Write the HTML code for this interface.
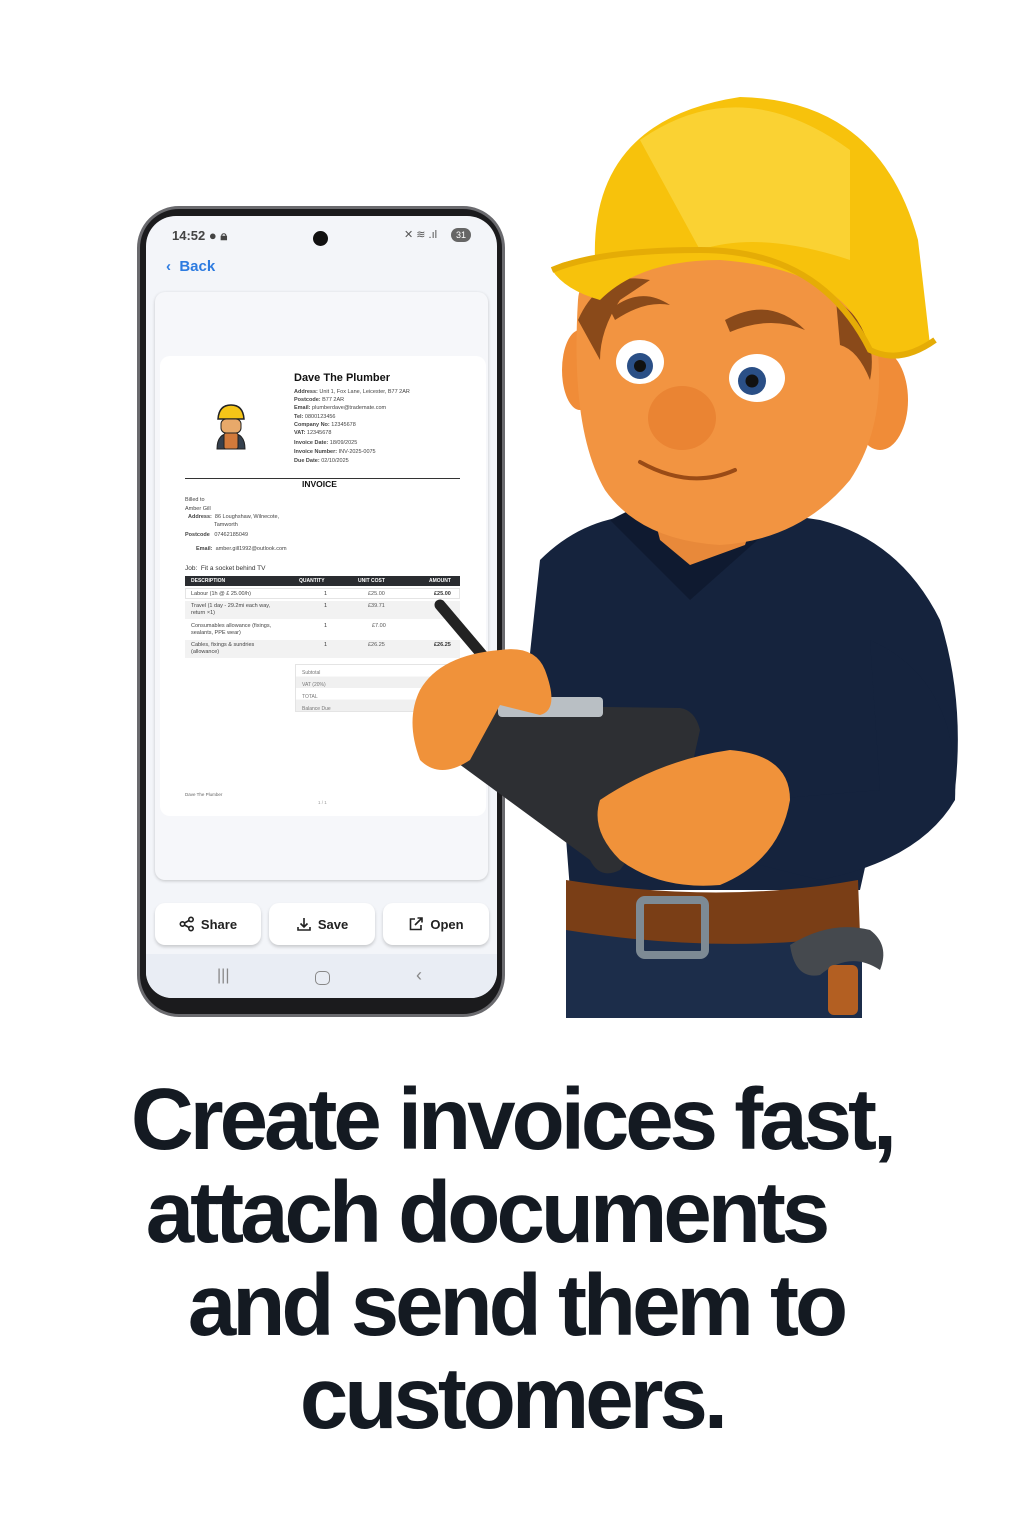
<!DOCTYPE html>
<html><head><meta charset="utf-8"><style>
*{margin:0;padding:0;box-sizing:border-box}
body{width:1024px;height:1536px;background:#fff;position:relative;overflow:hidden;font-family:"Liberation Sans",sans-serif}
.abs{position:absolute}
.phone{left:137px;top:206px;width:368px;height:811px;border-radius:42px;background:#1b1b1d;border:3px solid #6a6a6e}
.screen{left:146px;top:216px;width:351px;height:782px;border-radius:30px 30px 26px 26px;background:#f3f5f9;overflow:hidden}
.t{position:absolute;white-space:nowrap;color:#333}
.btn{position:absolute;top:687px;width:106px;height:42px;background:#fff;border-radius:10px;box-shadow:0 2px 3px rgba(0,0,0,.18);font-weight:bold;font-size:13px;color:#222;display:flex;align-items:center;justify-content:center;gap:6px}
.h{position:absolute;left:0;width:1024px;text-align:center;font-weight:bold;font-size:87px;letter-spacing:-4px;color:#141a22;line-height:93px}
</style></head><body>

<div class="abs phone"></div>
<div class="abs screen">
  <div class="t" style="left:26px;top:12px;font-size:13px;font-weight:bold;color:#444">14:52 ● 🔒︎</div>
  <div class="abs" style="left:167px;top:15px;width:15px;height:15px;border-radius:50%;background:#111"></div>
  <div class="t" style="left:258px;top:12px;font-size:11px;color:#555">✕ ≋ .ıl</div>
  <div class="abs" style="left:305px;top:12px;width:20px;height:14px;border-radius:7px;background:#666;color:#fff;font-size:9px;text-align:center;line-height:14px">31</div>
  <div class="t" style="left:20px;top:42px;font-size:15px;font-weight:bold;color:#2d7be0">‹&nbsp; Back</div>
  <div class="abs" style="left:9px;top:76px;width:333px;height:588px;border-radius:10px;background:#f6f7fa;box-shadow:0 1px 3px rgba(0,0,0,.2)"></div>
  <div class="abs" style="left:14px;top:140px;width:326px;height:460px;border-radius:10px;background:#fff"></div>
  <svg class="abs" style="left:68px;top:187px" width="34" height="48" viewBox="0 0 34 48">
    <path d="M4 16 Q5 2 17 2 Q29 2 30 16Z" fill="#f5c518" stroke="#222" stroke-width="1.5"/>
    <rect x="7" y="16" width="20" height="14" rx="5" fill="#e8a96a" stroke="#222"/>
    <path d="M3 46 Q3 30 17 30 Q31 30 31 46Z" fill="#35404d" stroke="#222"/>
    <rect x="10" y="30" width="14" height="16" rx="2" fill="#d27a3b" stroke="#222"/>
  </svg>
  <div class="t" style="left:148px;top:156px;font-size:11px;font-weight:bold;color:#111">Dave The Plumber</div>
  <div class="t" style="left:148px;top:172px;font-size:5.5px;line-height:8.2px;color:#444"><b>Address:</b> Unit 1, Fox Lane, Leicester, B77 2AR<br><b>Postcode:</b> B77 2AR<br><b>Email:</b> plumberdave@trademate.com<br><b>Tel:</b> 0800123456<br><b>Company No:</b> 12345678<br><b>VAT:</b> 12345678</div>
  <div class="t" style="left:148px;top:223px;font-size:5.5px;line-height:9px;color:#444"><b>Invoice Date:</b> 18/09/2025<br><b>Invoice Number:</b> INV-2025-0075<br><b>Due Date:</b> 02/10/2025</div>
  <div class="abs" style="left:39px;top:262px;width:275px;height:1px;background:#333"></div>
  <div class="t" style="left:156px;top:263px;font-size:8.5px;font-weight:bold;color:#111">INVOICE</div>
  <div class="t" style="left:39px;top:280px;font-size:5.5px;line-height:8.5px;color:#444">Billed to<br>Amber Gill</div>
  <div class="t" style="left:42px;top:298px;font-size:5.5px;line-height:7.5px;color:#444"><b>Address:</b>&nbsp; 86 Loughshaw, Wilnecote,<br>&nbsp;&nbsp;&nbsp;&nbsp;&nbsp;&nbsp;&nbsp;&nbsp;&nbsp;&nbsp;&nbsp;&nbsp;&nbsp;&nbsp;&nbsp;&nbsp;&nbsp;Tamworth</div>
  <div class="t" style="left:39px;top:316px;font-size:5.5px;color:#444"><b>Postcode</b>&nbsp;&nbsp;&nbsp;07462185049</div>
  <div class="t" style="left:50px;top:330px;font-size:5.5px;color:#444"><b>Email:</b>&nbsp; amber.gill1992@outlook.com</div>
  <div class="t" style="left:39px;top:349px;font-size:6.5px;color:#333">Job:&nbsp; Fit a socket behind TV</div>
  <div class="abs" style="left:39px;top:360px;width:275px;height:10px;background:#2a2c30"></div>
  <div class="t" style="left:45px;top:362px;font-size:5px;font-weight:bold;color:#fff">DESCRIPTION</div>
  <div class="t" style="left:153px;top:362px;font-size:5px;font-weight:bold;color:#fff">QUANTITY</div>
  <div class="t" style="left:212px;top:362px;font-size:5px;font-weight:bold;color:#fff">UNIT COST</div>
  <div class="t" style="left:283px;top:362px;font-size:5px;font-weight:bold;color:#fff">AMOUNT</div>
  <div class="abs" style="left:39px;top:372px;width:275px;height:11px;border:1px solid #e4e4e4"></div>
  <div class="abs" style="left:39px;top:385px;width:275px;height:18px;background:#f2f2f2"></div>
  <div class="abs" style="left:39px;top:424px;width:275px;height:18px;background:#f2f2f2"></div>
  <div class="t" style="left:45px;top:375px;font-size:5.5px;color:#444">Labour (1h @ £ 25.00/h)</div>
  <div class="t" style="left:45px;top:387px;font-size:5.5px;line-height:7px;color:#444">Travel (1 day - 29.2mi each way,<br>return ×1)</div>
  <div class="t" style="left:45px;top:407px;font-size:5.5px;line-height:7px;color:#444">Consumables allowance (fixings,<br>sealants, PPE wear)</div>
  <div class="t" style="left:45px;top:426px;font-size:5.5px;line-height:7px;color:#444">Cables, fixings &amp; sundries<br>(allowance)</div>
  <div class="t" style="left:178px;top:375px;font-size:5.5px">1</div>
  <div class="t" style="left:178px;top:387px;font-size:5.5px">1</div>
  <div class="t" style="left:178px;top:407px;font-size:5.5px">1</div>
  <div class="t" style="left:178px;top:426px;font-size:5.5px">1</div>
  <div class="t" style="left:222px;top:375px;font-size:5.5px;color:#555">£25.00</div>
  <div class="t" style="left:222px;top:387px;font-size:5.5px;color:#555">£39.71</div>
  <div class="t" style="left:226px;top:407px;font-size:5.5px;color:#555">£7.00</div>
  <div class="t" style="left:222px;top:426px;font-size:5.5px;color:#555">£26.25</div>
  <div class="t" style="left:288px;top:375px;font-size:5.5px;font-weight:bold;color:#333">£25.00</div>
  <div class="t" style="left:288px;top:426px;font-size:5.5px;font-weight:bold;color:#333">£26.25</div>
  <div class="abs" style="left:149px;top:448px;width:165px;height:48px;border:1px solid #e4e4e4;background:linear-gradient(#fff 0 25%,#f0f0f0 25% 50%,#fff 50% 75%,#f0f0f0 75%)"></div>
  <div class="t" style="left:156px;top:451px;font-size:5px;line-height:12px;color:#777">Subtotal<br>VAT (20%)<br>TOTAL<br>Balance Due</div>
  <div class="t" style="left:39px;top:576px;font-size:4.5px;color:#666">Dave The Plumber</div>
  <div class="t" style="left:172px;top:584px;font-size:4.5px;color:#999">1 / 1</div>
  <div class="btn" style="left:9px"><svg width="16" height="16" viewBox="0 0 16 16" fill="none" stroke="#222" stroke-width="1.6"><circle cx="3.5" cy="8" r="2.2"/><circle cx="12" cy="3.5" r="2.2"/><circle cx="12" cy="12.5" r="2.2"/><path d="M5.5 7 10 4.5M5.5 9 10 11.5"/></svg>Share</div>
  <div class="btn" style="left:123px"><svg width="16" height="16" viewBox="0 0 16 16" fill="none" stroke="#222" stroke-width="1.6"><path d="M8 2v9M4.5 7.5 8 11l3.5-3.5M2 11v3h12v-3"/></svg>Save</div>
  <div class="btn" style="left:237px"><svg width="16" height="16" viewBox="0 0 16 16" fill="none" stroke="#222" stroke-width="1.6"><path d="M7 3H2.5v10.5H13V9M9.5 2H14v4.5M14 2 7 9"/></svg>Open</div>
  <div class="abs" style="left:0;top:738px;width:351px;height:44px;background:#e9edf4"></div>
  <div class="t" style="left:71px;top:751px;font-size:16px;color:#888">|||</div>
  <div class="abs" style="left:169px;top:755px;width:15px;height:14px;border:1.6px solid #888;border-radius:5px"></div>
  <div class="t" style="left:270px;top:749px;font-size:18px;color:#888">‹</div>
</div>

<svg class="abs" style="left:400px;top:80px" width="580" height="950" viewBox="400 80 580 950">
  <path d="M566 930 L862 930 L862 1018 L566 1018Z" fill="#1c2d4a"/>
  <path d="M540 560 Q600 500 690 520 Q760 510 820 520 Q900 540 940 620 Q965 700 955 790 L880 800 L860 890 L570 890 L560 760 L525 700Z" fill="#15233d"/>
  <path d="M610 520 L690 600 L780 520 L760 505 L690 560 L640 505Z" fill="#0f1a30"/>
  <path d="M650 500 L760 500 L745 545 L690 565 L660 540Z" fill="#e8893a"/>
  <path d="M566 880 Q720 905 858 880 L860 935 Q720 955 566 930Z" fill="#7a3e16"/>
  <rect x="640" y="900" width="65" height="55" rx="5" fill="none" stroke="#7d8a94" stroke-width="8"/>
  <path d="M790 945 Q830 920 870 930 Q890 945 880 970 Q850 950 820 975 Q795 980 790 945Z" fill="#45494e"/>
  <rect x="828" y="965" width="30" height="50" rx="6" fill="#b35f22"/>
  <path d="M870 640 Q960 680 955 800 Q920 860 820 880 L740 860 L760 800 L880 790Z" fill="#15233d"/>
  <path d="M430 720 Q430 705 450 705 L680 708 Q695 710 700 730 L690 775 L620 870 Q600 880 590 860 L440 750 Q428 740 430 720Z" fill="#2d2f33"/>
  <rect x="498" y="697" width="105" height="20" rx="4" fill="#b9bfc4"/>
  <path d="M440 605 L512 690" stroke="#222" stroke-width="11" stroke-linecap="round"/>
  <path d="M420 690 Q440 655 500 650 Q535 645 545 670 Q560 710 540 715 L500 705 L470 760 Q440 780 420 760 Q405 720 420 690Z" fill="#f0923a"/>
  <path d="M600 800 Q660 760 730 750 Q790 755 790 800 Q780 860 720 885 Q660 890 620 860 Q590 830 600 800Z" fill="#f0923a"/>
  <ellipse cx="880" cy="400" rx="28" ry="50" fill="#f08c38"/>
  <ellipse cx="580" cy="370" rx="18" ry="40" fill="#f08c38"/>
  <path d="M578 300 Q580 250 720 250 Q860 255 875 330 Q890 420 850 480 Q800 540 720 545 Q640 540 605 490 Q570 430 578 300Z" fill="#f29441"/>
  <path d="M578 320 Q600 270 650 280 L620 300 Q600 330 600 360Z" fill="#8a4a1a"/>
  <path d="M836 300 Q880 330 870 380 Q858 350 840 345Z" fill="#8a4a1a"/>
  <path d="M610 310 Q640 285 670 305 Q645 300 615 320Z" fill="#8a4a1a"/>
  <path d="M725 320 Q770 295 805 330 Q770 315 730 332Z" fill="#8a4a1a"/>
  <ellipse cx="640" cy="362" rx="24" ry="22" fill="#fff"/><circle cx="640" cy="366" r="13" fill="#2a4f86"/><circle cx="640" cy="366" r="6" fill="#111"/>
  <ellipse cx="757" cy="378" rx="28" ry="24" fill="#fff"/><circle cx="752" cy="381" r="14" fill="#2a4f86"/><circle cx="752" cy="381" r="6.5" fill="#111"/>
  <ellipse cx="682" cy="418" rx="34" ry="32" fill="#ea8433"/>
  <path d="M640 462 Q690 490 735 470" stroke="#9a4b16" stroke-width="4" fill="none" stroke-linecap="round"/>
  <path d="M595 260 Q590 120 740 97 Q880 100 918 240 Q925 300 930 345 Q890 360 870 350 Q850 270 720 260 Q640 260 600 300 Q565 290 552 270 Q560 258 595 260Z" fill="#f7c20c"/>
  <path d="M640 140 Q740 70 850 150 L850 260 Q760 230 700 250Z" fill="#fad233"/>
  <path d="M552 270 Q600 250 700 250 Q820 250 870 350 Q900 365 935 340" stroke="#e5ac06" stroke-width="6" fill="none"/>
</svg>

<div class="h" style="top:1073px">Create invoices fast,</div>
<div class="h" style="top:1166px;padding-right:52px">attach documents</div>
<div class="h" style="top:1259px;padding-left:8px">and send them to</div>
<div class="h" style="top:1352px">customers.</div>
</body></html>
